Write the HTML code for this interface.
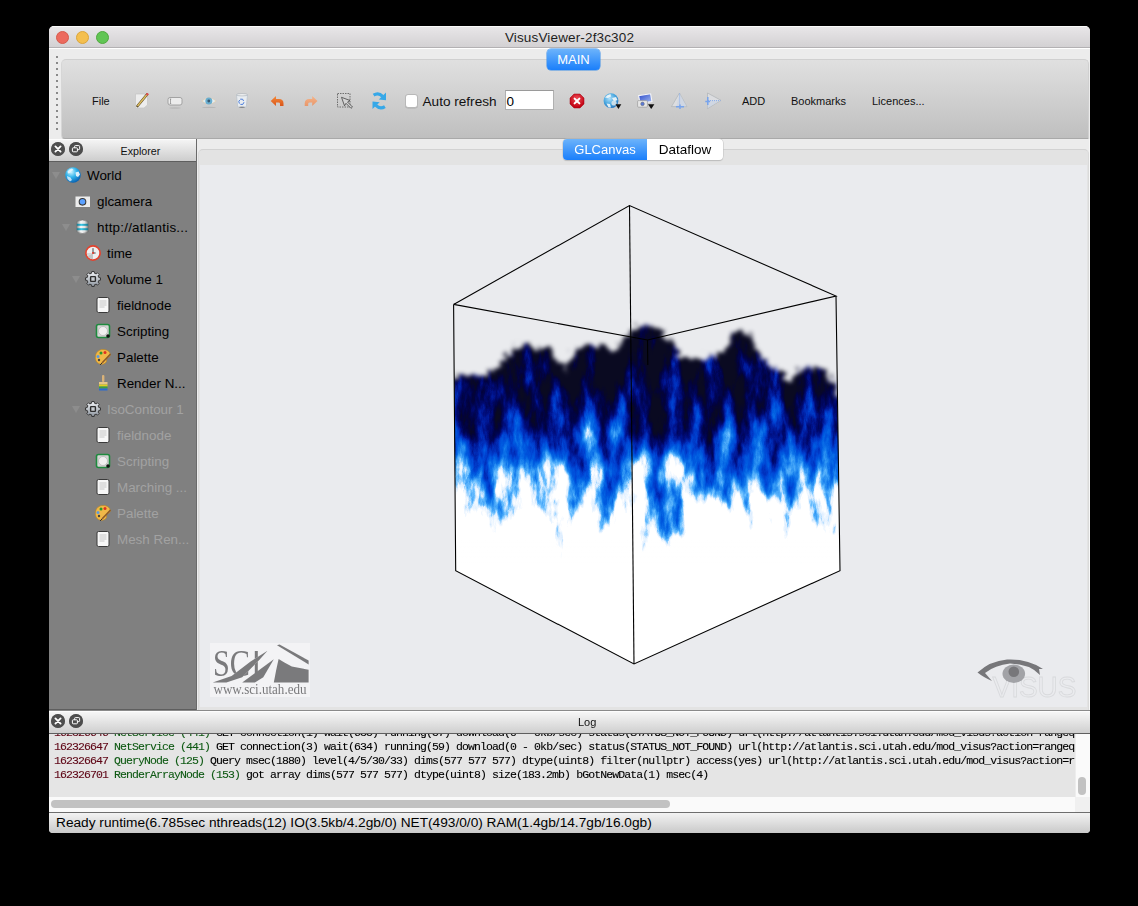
<!DOCTYPE html>
<html><head><meta charset="utf-8">
<style>
*{margin:0;padding:0;box-sizing:border-box}
html,body{width:1138px;height:906px;background:#000;overflow:hidden;font-family:"Liberation Sans",sans-serif}
.a{position:absolute}
#win{position:absolute;left:0;top:0;width:1138px;height:906px;clip-path:inset(26px 48px 73px 49px round 5px 5px 4px 4px);background:#ececec}
.tl{width:13px;height:13px;border-radius:50%;top:30.5px}
.grip{left:56px;width:2px;height:2px;background:#8a8a8a}
.tt{font-size:11px;color:#111;white-space:nowrap}
.ic{position:absolute}
.tree{font-size:13.4px;white-space:nowrap;color:#000}
.tree.g{color:#a2a2a2}
.tri{position:absolute;width:0;height:0;border-left:4.5px solid transparent;border-right:4.5px solid transparent;border-top:7px solid #8d8d8d}
.log{font-family:"Liberation Mono",monospace;font-size:11.5px;letter-spacing:-0.9px;white-space:pre;color:#000;position:absolute;-webkit-text-stroke:.1px currentColor}
.log .d{color:#5e0515}
.log .n{color:#0f5a14}
.dbtn{width:14px;height:14px;border-radius:50%;background:#505050}
</style></head><body>
<div id="win">
  <!-- title bar -->
  <div class="a" style="left:49px;top:26px;width:1041px;height:21px;background:linear-gradient(#e8e6e8,#d3d1d3);border-top:1px solid #fafafa"></div>
  <div class="a" style="left:49px;top:47px;width:1041px;height:1px;background:#b3b1b3"></div>
  <div class="a" style="left:49px;top:48px;width:1041px;height:1px;background:#ffffff"></div>
  <div class="a" style="left:49px;top:30px;width:1041px;text-align:center;font-size:13.5px;letter-spacing:.15px;color:#1e1e1e">VisusViewer-2f3c302</div>
  <div class="tl a" style="left:56px;background:#ec6a5e;border:1px solid #d55a4c"></div>
  <div class="tl a" style="left:76px;background:#f4bf4f;border:1px solid #dba53a"></div>
  <div class="tl a" style="left:96px;background:#61c554;border:1px solid #4fa83e"></div>

  <!-- toolbar -->
  <div class="a" style="left:61px;top:59px;width:1028px;height:80px;border-radius:5px 5px 0 4px;background:linear-gradient(#e0e0e0,#bfbfbf);border-top:1px solid #d0d0d0;border-left:1px solid #d6d6d6;border-right:1px solid #d0d0d0;border-bottom:1px solid #a9a9a9"></div>
  <div class="grip a" style="top:56px"></div><div class="grip a" style="top:62px"></div><div class="grip a" style="top:68px"></div><div class="grip a" style="top:74px"></div><div class="grip a" style="top:80px"></div><div class="grip a" style="top:86px"></div><div class="grip a" style="top:92px"></div><div class="grip a" style="top:98px"></div><div class="grip a" style="top:104px"></div><div class="grip a" style="top:110px"></div><div class="grip a" style="top:116px"></div><div class="grip a" style="top:122px"></div><div class="grip a" style="top:128px"></div>
  <div class="a" style="left:547px;top:49px;width:53px;height:21px;border-radius:4px;background:linear-gradient(#6cb3fb,#1a7ffb);box-shadow:0 0 0 0.5px #3b8de8;color:#fff;font-size:13px;text-align:center;line-height:21px">MAIN</div>

<svg class="a" style="left:0;top:0" width="1138" height="140" viewBox="0 0 1138 140">
<defs>
<linearGradient id="orng" x1="0" y1="0" x2="0" y2="1"><stop offset="0" stop-color="#f58a3a"/><stop offset="1" stop-color="#d9561a"/></linearGradient>
<linearGradient id="orng2" x1="0" y1="0" x2="0" y2="1"><stop offset="0" stop-color="#f6b488"/><stop offset="1" stop-color="#e8966a"/></linearGradient>
<radialGradient id="rstop" cx="50%" cy="35%" r="60%"><stop offset="0" stop-color="#f0505a"/><stop offset="1" stop-color="#c00010"/></radialGradient>
<radialGradient id="glb" cx="40%" cy="35%" r="65%"><stop offset="0" stop-color="#b0e0fa"/><stop offset=".6" stop-color="#4aa8e0"/><stop offset="1" stop-color="#2a7ac0"/></radialGradient>
</defs>
<!-- pencil/paper -->
<path d="M135.5 94 H144.5 L147.5 97 V105 L144 108 H135.5 Z" fill="#ededed" stroke="#c4c4c4" stroke-width=".7"/>
<path d="M137.5 106 L147 94.5" stroke="#5a4a2a" stroke-width="2.6" stroke-linecap="round"/>
<path d="M137.5 106 L147 94.5" stroke="#e0c060" stroke-width="1.4"/>
<circle cx="147.3" cy="94.2" r="1.2" fill="#e05050"/>
<!-- textbox -->
<rect x="168" y="97.5" width="14" height="7.5" rx="2" fill="#ececec" stroke="#9c9c9c" stroke-width=".9"/>
<path d="M170.5 99 V103.5 M169.8 99 H171.2 M169.8 103.5 H171.2" stroke="#777" stroke-width=".6"/>
<ellipse cx="175" cy="108" rx="6" ry=".8" fill="#b0b0b0" opacity=".7"/>
<!-- eye -->
<path d="M201.8 101 Q209 95 216.2 101 Q209 107 201.8 101Z" fill="#e2eef2" stroke="#e8c89a" stroke-width=".5"/>
<circle cx="208.8" cy="101" r="3.5" fill="#6aaed0"/>
<circle cx="208.8" cy="101" r="1.4" fill="#3a5a70"/>
<ellipse cx="209" cy="107.4" rx="7" ry=".7" fill="#a8a8a8" opacity=".6"/>
<!-- trash -->
<path d="M236.5 94.8 H247.5 L246.3 106.8 Q242 108.6 237.7 106.8 Z" fill="#e8ecf0" stroke="#b8c0c8" stroke-width=".7"/>
<ellipse cx="242" cy="94.8" rx="5.5" ry="1.1" fill="#f6f6f6" stroke="#a0a8b0" stroke-width=".6"/>
<ellipse cx="242" cy="107.2" rx="3" ry=".8" fill="#555" opacity=".6"/>
<path d="M240.2 99.2 L242.6 99.2 L243.6 101" stroke="#3a70d8" stroke-width=".9" fill="none"/>
<path d="M244 102.2 L242.8 104.4 L240.4 104.4" stroke="#3a70d8" stroke-width=".9" fill="none"/>
<path d="M239.4 103.6 L238.8 101.4 L239.8 100" stroke="#3a70d8" stroke-width=".9" fill="none"/>
<!-- undo -->
<path d="M270.7 101 L276 96 V99 H279 Q283.5 99 283.5 103.5 V106 H280 V103.8 Q280 102.5 278.5 102.5 H276 V106 Z" fill="url(#orng)"/>
<!-- redo -->
<path d="M317.5 101 L312.2 96 V99 H309.2 Q304.7 99 304.7 103.5 V106 H308.2 V103.8 Q308.2 102.5 309.7 102.5 H312.2 V106 Z" fill="url(#orng2)"/>
<!-- select -->
<rect x="337.5" y="93.5" width="12.5" height="13.5" fill="none" stroke="#555" stroke-width=".8" stroke-dasharray="1.5 1"/>
<path d="M341.5 97.3 L350 100.5 L347.5 102 L352.5 107 L351 108.3 L346 103.3 L344.5 105.8 Z" fill="#d4d4d4" stroke="#444" stroke-width=".8"/>
<!-- refresh -->
<path d="M373.6 95.2 Q378.5 92.2 382.6 96.4" stroke="#36a8e8" stroke-width="3.2" fill="none"/>
<path d="M386 92.6 L386 100.2 L378.8 99.4 Z" fill="#36a8e8"/>
<path d="M384.9 106.6 Q380 109.6 375.9 105.4" stroke="#36a8e8" stroke-width="3.2" fill="none"/>
<path d="M372.5 109 L372.5 101.4 L379.7 102.2 Z" fill="#36a8e8"/>
<!-- stop -->
<path d="M574 94 H580 L584 98 V104 L580 108 H574 L570 104 V98 Z" fill="url(#rstop)" stroke="#a00010" stroke-width=".5"/>
<path d="M574.6 98.6 L579.4 103.4 M579.4 98.6 L574.6 103.4" stroke="#fff" stroke-width="2" stroke-linecap="round"/>
<!-- globe -->
<circle cx="611" cy="100.7" r="7.4" fill="url(#glb)"/>
<path d="M605 97.5 Q607 94.5 610.5 94 L611 96.5 L608 98 Z M612 98 L616 97 L617.5 100 L614 101.5Z M606.5 103.5 L610 104 L611 107.5 L608.5 107.5Z" fill="#f4f8fa" opacity=".9"/>
<circle cx="614" cy="103" r="2.6" fill="#d8e4ea" opacity=".9"/>
<path d="M615.5 104.3 H621.3 L618.4 109 Z" fill="#111"/>
<!-- picture/camera -->
<defs><linearGradient id="phg" x1="0" y1="0" x2="1" y2="1"><stop offset="0" stop-color="#2a48c8"/><stop offset="1" stop-color="#a8c0f4"/></linearGradient></defs>
<path d="M638.6 95.6 L650.6 93.8 L652 101.6 L640 103.4 Z" fill="url(#phg)" stroke="#f4f4f8" stroke-width="1.1"/>
<rect x="637.6" y="100.6" width="9.8" height="6.6" rx="1" fill="#e6e6e6" stroke="#8e8e8e" stroke-width=".6"/>
<circle cx="642.5" cy="103.9" r="1.8" fill="#5a7ad8" stroke="#666" stroke-width=".5"/>
<path d="M648 104.3 H654.4 L651.2 109 Z" fill="#111"/>
<!-- pyramid 1 -->
<path d="M679.4 93.1 L671.5 106.6 H686.9 Z" fill="#dcdde0" stroke="#a8acb0" stroke-width=".6"/>
<path d="M679.4 93.1 L676.5 106.6 H686.9 Z" fill="#c8d4e4" opacity=".6"/>
<path d="M679.6 93.5 V106" stroke="#7ea8ea" stroke-width=".9" stroke-dasharray="1 1"/>
<path d="M676 106.7 H684 M680 104.5 L680 109" stroke="#78a4ec" stroke-width="1.5"/>
<!-- pyramid 2 -->
<path d="M707.5 93 L721 100.3 L707.5 108.6 Z" fill="#dcdde0" stroke="#a8acb0" stroke-width=".6"/>
<path d="M707.5 100.3 L721 100.3 L707.5 108.6 Z" fill="#c8d4e4" opacity=".6"/>
<path d="M708 100.6 H720.5" stroke="#7ea8ea" stroke-width=".9" stroke-dasharray="1 1"/>
<path d="M707.8 97 V105 M705.3 101.6 H710" stroke="#78a4ec" stroke-width="1.5"/>
</svg>
  <div class="tt a" style="left:92px;top:95px">File</div>
  <div class="a" style="left:404.5px;top:94px;width:13.5px;height:13.5px;background:#fff;border:1px solid #b8b8b8;border-radius:3px;box-shadow:0 0.5px 0.5px rgba(0,0,0,.15)"></div>
  <div class="a" style="left:422.5px;top:94px;font-size:13.6px;color:#111;white-space:nowrap">Auto refresh</div>
  <div class="a" style="left:505px;top:90px;width:49px;height:20px;background:#fff;border:1px solid #b0b0b0;border-top-color:#9a9a9a"></div>
  <div class="a" style="left:506.5px;top:94px;font-size:13.5px;color:#000">0</div>
  <div class="tt a" style="left:742px;top:95px">ADD</div>
  <div class="tt a" style="left:791px;top:95px">Bookmarks</div>
  <div class="tt a" style="left:872px;top:95px">Licences...</div>

  <!-- explorer dock -->
  <div class="a" style="left:49px;top:139px;width:148px;height:22px;background:linear-gradient(#f4f4f4,#cdcdcd);border-top:1px solid #fdfdfd"></div>
  <div class="a" style="left:49px;top:161px;width:148px;height:1px;background:#5e5e5e"></div>
  <div class="a" style="left:49px;top:162px;width:147px;height:547px;background:#808080"></div>
  <div class="a" style="left:49px;top:709px;width:148px;height:1px;background:#5e5e5e"></div>
  <div class="a" style="left:196px;top:139px;width:1px;height:571px;background:#6a6a6a"></div>
  <div class="dbtn a" style="left:51px;top:142px"><svg width="14" height="14" style="position:absolute;left:0;top:0"><circle cx="7" cy="7" r="6.8" fill="#4d4d4d"/><path d="M4.4 4.4 L9.6 9.6 M9.6 4.4 L4.4 9.6" stroke="#fff" stroke-width="1.8" stroke-linecap="round"/></svg></div>
  <div class="dbtn a" style="left:69px;top:142px"><svg width="14" height="14" style="position:absolute;left:0;top:0"><circle cx="7" cy="7" r="6.8" fill="#4d4d4d"/><rect x="5.6" y="3.6" width="5" height="4" rx=".8" fill="none" stroke="#fff" stroke-width="1"/><rect x="3.4" y="5.8" width="5" height="4" rx=".8" fill="#4d4d4d" stroke="#fff" stroke-width="1"/></svg></div>
  <div class="a" style="left:120.5px;top:144.5px;font-size:10.7px;color:#111;white-space:nowrap">Explorer</div>

  <div class="tri" style="left:52px;top:172px"></div><div class="a ico0" style="left:65px;top:167px;width:16px;height:16px"><svg width="18" height="18" viewBox="0 0 18 18" style="position:absolute;left:-1px;top:-1px"><defs><radialGradient id="gw" cx="38%" cy="30%" r="70%"><stop offset="0" stop-color="#d0f4ff"/><stop offset=".5" stop-color="#30b4ec"/><stop offset="1" stop-color="#0a64b4"/></radialGradient></defs><circle cx="9" cy="9" r="7.8" fill="url(#gw)"/><path d="M3.5 5.5 Q5 3 8 2.6 L9.5 4 L7 5.2 L6.2 7 L4 7.5Z" fill="#e8f6ff" opacity=".9"/><path d="M11.5 6.5 L14.5 5.5 L16 8.5 L14 11 L12 10 Z" fill="#f2faff" opacity=".9"/><path d="M3 10 L6.5 11.5 L8 14 L6 15.5 L3.5 13Z" fill="#d8efff" opacity=".85"/></svg></div><div class="tree a" style="left:87px;top:168px">World</div>
<div class="a ico1" style="left:75px;top:193px;width:16px;height:16px"><svg width="16" height="12" style="position:absolute;left:0;top:3px"><rect x=".5" y=".5" width="14.5" height="10.5" fill="#ececec"/><circle cx="7.5" cy="5.8" r="3.3" fill="#5aa0ff" stroke="#3a3a3a" stroke-width="1.1"/></svg></div><div class="tree a" style="left:97px;top:194px">glcamera</div>
<div class="tri" style="left:62px;top:224px"></div><div class="a ico2" style="left:75px;top:219px;width:16px;height:16px"><svg width="16" height="16" style="position:absolute;left:1px;top:0"><defs><linearGradient id="db" x1="0" x2="1"><stop offset="0" stop-color="#8a9090"/><stop offset=".35" stop-color="#f8f8f8"/><stop offset=".7" stop-color="#e0e0e0"/><stop offset="1" stop-color="#7a8080"/></linearGradient><linearGradient id="dbt" x1="0" x2="1"><stop offset="0" stop-color="#1a7a90"/><stop offset=".4" stop-color="#3ac8e8"/><stop offset="1" stop-color="#1a7a90"/></linearGradient></defs><path d="M0.8 2.5 Q6.5 -0.5 12.2 2.5 V13 Q6.5 16 0.8 13Z" fill="url(#db)" stroke="#6a6a6a" stroke-width=".5"/><rect x=".8" y="4.8" width="11.4" height="2" fill="url(#dbt)"/><rect x=".8" y="9.2" width="11.4" height="2" fill="url(#dbt)"/></svg></div><div class="tree a" style="letter-spacing:.23px;left:97px;top:220px">http://atlantis...</div>
<div class="a ico3" style="left:85px;top:245px;width:16px;height:16px"><svg width="18" height="18" style="position:absolute;left:-1px;top:-1px"><circle cx="9" cy="9" r="7.1" fill="#f0f0f0" stroke="#e4422e" stroke-width="1.7"/><path d="M9 9 L9 15.2 A6.2 6.2 0 0 1 3.6 12.1Z" fill="#c4c4c4"/><path d="M9 9 L3.6 12.1 A6.2 6.2 0 0 1 2.8 9Z" fill="#d6d6d6"/><path d="M9 4.2 V9 H11.6" stroke="#444" stroke-width="1" fill="none"/><circle cx="9" cy="9" r="1.1" fill="#e03a2a"/></svg></div><div class="tree a" style="left:107px;top:246px">time</div>
<div class="tri" style="left:72px;top:276px"></div><div class="a ico4" style="left:85px;top:271px;width:16px;height:16px"><svg width="18" height="18" viewBox="0 0 18 18" style="position:absolute;left:-1px;top:-1px"><defs><linearGradient id="gx0" x1="0" y1="0" x2="0" y2="1"><stop offset="0" stop-color="#f4f6f8"/><stop offset="1" stop-color="#8e96a0"/></linearGradient></defs><path d="M14.83 7.60 L16.51 7.81 L16.51 10.19 L14.83 10.40 L14.12 12.13 L15.15 13.47 L13.47 15.15 L12.13 14.12 L10.40 14.83 L10.19 16.51 L7.81 16.51 L7.60 14.83 L5.87 14.12 L4.53 15.15 L2.85 13.47 L3.88 12.13 L3.17 10.40 L1.49 10.19 L1.49 7.81 L3.17 7.60 L3.88 5.87 L2.85 4.53 L4.53 2.85 L5.87 3.88 L7.60 3.17 L7.81 1.49 L10.19 1.49 L10.40 3.17 L12.13 3.88 L13.47 2.85 L15.15 4.53 L14.12 5.87Z" fill="url(#gx0)" stroke="#2e2e2e" stroke-width=".9" stroke-linejoin="round"/><rect x="6.6" y="6.6" width="4.8" height="4.8" rx=".6" fill="#c8ccd0" stroke="#2e2e2e" stroke-width="1.4"/></svg></div><div class="tree a" style="left:107px;top:272px">Volume 1</div>
<div class="a ico5" style="left:95px;top:297px;width:16px;height:16px"><svg width="16" height="16" style="position:absolute;left:0;top:0"><rect x="2" y=".5" width="12" height="15" rx="1.5" fill="#f7f7f7" stroke="#3a3a3a" stroke-width="1"/><path d="M4.5 4h7M4.5 6h7M4.5 8h7M4.5 10h5" stroke="#bbb" stroke-width=".8"/></svg></div><div class="tree a" style="left:117px;top:298px">fieldnode</div>
<div class="a ico6" style="left:95px;top:323px;width:16px;height:16px"><svg width="16" height="16" style="position:absolute;left:0;top:0"><rect x="1.5" y="1.5" width="13" height="13" rx="2" fill="#d4d4d4" stroke="#1e8a3e" stroke-width="1.6"/><circle cx="8" cy="8" r="4.5" fill="#f0f0f0" stroke="#aaa" stroke-width=".6"/><circle cx="13" cy="13" r="1.8" fill="#111"/></svg></div><div class="tree a" style="left:117px;top:324px">Scripting</div>
<div class="a ico7" style="left:95px;top:349px;width:16px;height:16px"><svg width="18" height="18" style="position:absolute;left:-1px;top:-1px"><path d="M9 1.5 C14 1.5 17 4.5 16 8 C15 10 12 9 12.5 12 C13 15 9 17 6 16 C2 15 1 11 1.5 8 C2 4 5 1.5 9 1.5Z" fill="#f0b848" stroke="#c0841a" stroke-width=".6"/><circle cx="7" cy="5" r="1.5" fill="#2a9a2a"/><circle cx="11" cy="4.5" r="1.5" fill="#e03020"/><circle cx="4" cy="8.5" r="1.5" fill="#5a9ae0"/><circle cx="5" cy="12" r="1.2" fill="#444"/><path d="M16.5 6 L8 15" stroke="#8a5a2a" stroke-width="1.6"/><path d="M8 15 L6 17" stroke="#333" stroke-width="1"/></svg></div><div class="tree a" style="left:117px;top:350px">Palette</div>
<div class="a ico8" style="left:95px;top:375px;width:16px;height:16px"><svg width="16" height="16" style="position:absolute;left:0;top:0"><rect x="7" y="0" width="2.4" height="7" rx="1" fill="#d9b278"/><rect x="4" y="7" width="8.5" height="2.5" fill="#e6c58a"/><rect x="4" y="9.5" width="8.5" height="2" fill="#e0d020"/><rect x="4" y="11.5" width="8.5" height="2" fill="#3aa040"/><rect x="4" y="13.5" width="8.5" height="2" fill="#2a6ad0"/></svg></div><div class="tree a" style="left:117px;top:376px">Render N...</div>
<div class="tri" style="left:72px;top:406px"></div><div class="a ico9" style="left:85px;top:401px;width:16px;height:16px"><svg width="18" height="18" viewBox="0 0 18 18" style="position:absolute;left:-1px;top:-1px"><defs><linearGradient id="gx1" x1="0" y1="0" x2="0" y2="1"><stop offset="0" stop-color="#f4f6f8"/><stop offset="1" stop-color="#8e96a0"/></linearGradient></defs><path d="M14.83 7.60 L16.51 7.81 L16.51 10.19 L14.83 10.40 L14.12 12.13 L15.15 13.47 L13.47 15.15 L12.13 14.12 L10.40 14.83 L10.19 16.51 L7.81 16.51 L7.60 14.83 L5.87 14.12 L4.53 15.15 L2.85 13.47 L3.88 12.13 L3.17 10.40 L1.49 10.19 L1.49 7.81 L3.17 7.60 L3.88 5.87 L2.85 4.53 L4.53 2.85 L5.87 3.88 L7.60 3.17 L7.81 1.49 L10.19 1.49 L10.40 3.17 L12.13 3.88 L13.47 2.85 L15.15 4.53 L14.12 5.87Z" fill="url(#gx1)" stroke="#2e2e2e" stroke-width=".9" stroke-linejoin="round"/><rect x="6.6" y="6.6" width="4.8" height="4.8" rx=".6" fill="#c8ccd0" stroke="#2e2e2e" stroke-width="1.4"/></svg></div><div class="tree a g" style="left:107px;top:402px">IsoContour 1</div>
<div class="a ico10" style="left:95px;top:427px;width:16px;height:16px"><svg width="16" height="16" style="position:absolute;left:0;top:0"><rect x="2" y=".5" width="12" height="15" rx="1.5" fill="#f7f7f7" stroke="#3a3a3a" stroke-width="1"/><path d="M4.5 4h7M4.5 6h7M4.5 8h7M4.5 10h5" stroke="#bbb" stroke-width=".8"/></svg></div><div class="tree a g" style="left:117px;top:428px">fieldnode</div>
<div class="a ico11" style="left:95px;top:453px;width:16px;height:16px"><svg width="16" height="16" style="position:absolute;left:0;top:0"><rect x="1.5" y="1.5" width="13" height="13" rx="2" fill="#d4d4d4" stroke="#1e8a3e" stroke-width="1.6"/><circle cx="8" cy="8" r="4.5" fill="#f0f0f0" stroke="#aaa" stroke-width=".6"/><circle cx="13" cy="13" r="1.8" fill="#111"/></svg></div><div class="tree a g" style="left:117px;top:454px">Scripting</div>
<div class="a ico12" style="left:95px;top:479px;width:16px;height:16px"><svg width="16" height="16" style="position:absolute;left:0;top:0"><rect x="2" y=".5" width="12" height="15" rx="1.5" fill="#f7f7f7" stroke="#3a3a3a" stroke-width="1"/><path d="M4.5 4h7M4.5 6h7M4.5 8h7M4.5 10h5" stroke="#bbb" stroke-width=".8"/></svg></div><div class="tree a g" style="left:117px;top:480px">Marching ...</div>
<div class="a ico13" style="left:95px;top:505px;width:16px;height:16px"><svg width="18" height="18" style="position:absolute;left:-1px;top:-1px"><path d="M9 1.5 C14 1.5 17 4.5 16 8 C15 10 12 9 12.5 12 C13 15 9 17 6 16 C2 15 1 11 1.5 8 C2 4 5 1.5 9 1.5Z" fill="#f0b848" stroke="#c0841a" stroke-width=".6"/><circle cx="7" cy="5" r="1.5" fill="#2a9a2a"/><circle cx="11" cy="4.5" r="1.5" fill="#e03020"/><circle cx="4" cy="8.5" r="1.5" fill="#5a9ae0"/><circle cx="5" cy="12" r="1.2" fill="#444"/><path d="M16.5 6 L8 15" stroke="#8a5a2a" stroke-width="1.6"/><path d="M8 15 L6 17" stroke="#333" stroke-width="1"/></svg></div><div class="tree a g" style="left:117px;top:506px">Palette</div>
<div class="a ico14" style="left:95px;top:531px;width:16px;height:16px"><svg width="16" height="16" style="position:absolute;left:0;top:0"><rect x="2" y=".5" width="12" height="15" rx="1.5" fill="#f7f7f7" stroke="#3a3a3a" stroke-width="1"/><path d="M4.5 4h7M4.5 6h7M4.5 8h7M4.5 10h5" stroke="#bbb" stroke-width=".8"/></svg></div><div class="tree a g" style="left:117px;top:532px">Mesh Ren...</div>

  <!-- main tab area -->
  <div class="a" style="left:198px;top:149px;width:891px;height:561px;border-radius:5px 5px 0 0;background:#e3e3e3;border-top:1px solid #d2d2d2;border-left:1px solid #dadada;border-right:1px solid #dadada"></div>
  <div class="a" style="left:200px;top:165px;width:887px;height:542px;background:#eaebee"></div>
<svg class="a" width="1138" height="906" style="left:0;top:0">
<defs>
<clipPath id="cubeclip"><polygon points="453.6,304.4 629.5,205.5 836,296 840,570.7 634,664 455.7,570.7"/></clipPath>
<linearGradient id="dens" x1="0" y1="330" x2="0" y2="540" gradientUnits="userSpaceOnUse"><stop offset="0.000" stop-color="rgb(229,229,229)"/><stop offset="0.190" stop-color="rgb(204,204,204)"/><stop offset="0.371" stop-color="rgb(173,173,173)"/><stop offset="0.562" stop-color="rgb(132,132,132)"/><stop offset="0.762" stop-color="rgb(76,76,76)"/><stop offset="1.000" stop-color="rgb(0,0,0)"/></linearGradient>
<linearGradient id="wfade" x1="0" y1="540" x2="0" y2="566" gradientUnits="userSpaceOnUse"><stop offset="0" stop-color="#fff" stop-opacity="0"/><stop offset="1" stop-color="#fff" stop-opacity="1"/></linearGradient>
<filter id="bl8" x="400" y="300" width="500" height="400" filterUnits="userSpaceOnUse"><feGaussianBlur stdDeviation="8"/></filter>
<filter id="mblur" x="430" y="280" width="430" height="440" filterUnits="userSpaceOnUse"><feTurbulence type="fractalNoise" baseFrequency="0.13" numOctaves="3" seed="3" result="mn"/><feDisplacementMap in="SourceGraphic" in2="mn" scale="16" xChannelSelector="R" yChannelSelector="G" result="d"/><feGaussianBlur in="d" stdDeviation="2.2"/></filter>
<mask id="topmask" maskUnits="userSpaceOnUse" x="430" y="180" width="430" height="520"><path d="M450 380 C452.0 379.0 457.8 374.7 462 374 C466.2 373.3 470.3 376.3 475 376 C479.7 375.7 485.8 374.0 490 372 C494.2 370.0 497.2 367.0 500 364 C502.8 361.0 503.7 357.0 507 354 C510.3 351.0 515.3 347.2 520 346 C524.7 344.8 530.3 346.2 535 347 C539.7 347.8 544.2 348.8 548 351 C551.8 353.2 555.0 357.2 558 360 C561.0 362.8 563.7 368.7 566 368 C568.3 367.3 570.0 359.3 572 356 C574.0 352.7 574.7 349.8 578 348 C581.3 346.2 587.5 345.2 592 345 C596.5 344.8 601.0 346.2 605 347 C609.0 347.8 612.5 351.8 616 350 C619.5 348.2 622.7 339.8 626 336 C629.3 332.2 632.0 328.7 636 327 C640.0 325.3 645.7 325.5 650 326 C654.3 326.5 658.3 326.8 662 330 C665.7 333.2 668.7 340.7 672 345 C675.3 349.3 677.3 353.8 682 356 C686.7 358.2 694.7 358.2 700 358 C705.3 357.8 710.0 356.3 714 355 C718.0 353.7 721.0 353.5 724 350 C727.0 346.5 729.0 337.2 732 334 C735.0 330.8 738.7 330.3 742 331 C745.3 331.7 749.0 333.8 752 338 C755.0 342.2 756.2 350.8 760 356 C763.8 361.2 770.0 365.0 775 369 C780.0 373.0 786.3 379.5 790 380 C793.7 380.5 794.3 374.3 797 372 C799.7 369.7 802.5 366.7 806 366 C809.5 365.3 814.3 366.8 818 368 C821.7 369.2 825.0 369.0 828 373 C831.0 377.0 833.2 387.5 836 392 C838.8 396.5 843.5 398.7 845 400 L845 700 L440 700 Z" fill="#fff" filter="url(#mblur)"/></mask>
<filter id="flame" x="440" y="190" width="410" height="490" filterUnits="userSpaceOnUse" color-interpolation-filters="sRGB">
<feTurbulence type="fractalNoise" baseFrequency="0.06 0.02" numOctaves="5" seed="7" result="n"/>
<feColorMatrix in="n" type="matrix" values="1 0 0 0 0  1 0 0 0 0  1 0 0 0 0  0 0 0 0 1" result="ng"/>
<feComposite in="SourceGraphic" in2="ng" operator="arithmetic" k1="0" k2="1" k3="0.75" k4="-0.375" result="v"/>
<feComponentTransfer in="v">
<feFuncR type="table" tableValues="1 1 1 1 1 .88 .42 .2 .06 0 0 0 0 0 0 .01 .03 .04 .04 .04 .04"/>
<feFuncG type="table" tableValues="1 1 1 1 1 .94 .75 .6 .46 .36 .28 .19 .1 .04 .02 .01 .03 .04 .04 .04 .04"/>
<feFuncB type="table" tableValues="1 1 1 1 1 1 1 .96 .92 .88 .84 .74 .6 .45 .33 .24 .16 .13 .13 .13 .13"/>
</feComponentTransfer>
</filter>
</defs>
<g clip-path="url(#cubeclip)"><g mask="url(#topmask)">
<g filter="url(#flame)"><rect x="440" y="190" width="410" height="490" fill="url(#dens)"/>
<g filter="url(#bl8)">
<ellipse cx="662" cy="515" rx="16" ry="40" fill="#fff" opacity=".22"/>
<ellipse cx="600" cy="500" rx="14" ry="25" fill="#fff" opacity=".12"/>
<ellipse cx="490" cy="500" rx="12" ry="25" fill="#fff" opacity=".12"/>
<ellipse cx="458" cy="480" rx="12" ry="40" fill="#000" opacity=".35"/>
<ellipse cx="522" cy="485" rx="10" ry="20" fill="#000" opacity=".15"/>
<ellipse cx="642" cy="500" rx="7" ry="30" fill="#000" opacity=".2"/>
<ellipse cx="825" cy="490" rx="12" ry="25" fill="#000" opacity=".15"/>
</g></g>
</g>
<rect x="440" y="540" width="410" height="140" fill="url(#wfade)"/>
</g>
<g stroke="#000" stroke-width="1.1" fill="none">
<path d="M453.6 304.4 L629.5 205.5 L836 296 L647.5 340 L453.6 304.4"/>
<path d="M629.5 205.5 L634 664"/>
<path d="M647.5 340 L647.8 365"/>
<path d="M453.6 304.4 L455.7 570.7 L634 664 L840 570.7 L836 296"/>
</g>
</svg>
<svg class="a" width="1138" height="906" style="left:0;top:0">
<rect x="210" y="643" width="100" height="54" fill="#f3f3f5"/>
<g fill="#7a7a7c">
<text x="213" y="676" font-family="Liberation Serif" font-size="37" textLength="37" lengthAdjust="spacingAndGlyphs">SC</text>
<rect x="254.8" y="651" width="3" height="25"/>
<path d="M212.7 682.5 L231.6 676.1 L250.6 661.4 L267.5 650.8 L259 660.3 L242.2 677.2 L226.4 682.5Z" fill="#f3f3f5"/>
<path d="M212.7 682.5 L231.6 676.1 L250.6 661.4 L267.5 650.8 L259 660.3 L242.2 677.2 L226.4 682.5Z"/>
<path d="M242.2 682.5 L273.8 659.3 L263.3 677.2 L254.9 682.5Z"/>
<path d="M276 671 L278.6 659 L284.4 662.4 L291.8 666.6 L308.6 669.8 L308.6 682.5 L273.8 682.5Z"/>
<path d="M277 645.3 L279.5 644.5 L308.6 660.5 L308.6 664.5Z"/>
<text x="213.5" y="693.5" font-family="Liberation Serif" font-size="15" textLength="93" lengthAdjust="spacingAndGlyphs">www.sci.utah.edu</text>
</g>
<text x="992.5" y="696.5" font-family="Liberation Sans" font-size="30" fill="none" stroke="#d9dadd" stroke-width=".9" textLength="84" lengthAdjust="spacingAndGlyphs">VISUS</text>
<ellipse cx="1013.8" cy="673.7" rx="11.3" ry="9.2" fill="#a2a3a7"/>
<circle cx="1013.8" cy="671.8" r="5.3" fill="#77777a"/>
<path d="M977.5 672.5 Q990 661 1007 659.5 Q1028 658.5 1043 669 L1039 669 L1040 675 Q1030 664 1010 663.5 Q995 665 985 673 L992 681 Q983 677 977.5 672.5Z" fill="#77777a"/>
</svg>
  <div class="a" style="left:563px;top:139px;width:160px;height:21px;border-radius:4px;background:#fff;box-shadow:0 0 0 0.5px #c4c4c4, 0 0.5px 1px rgba(0,0,0,.2)"></div>
  <div class="a" style="left:563px;top:139px;width:84px;height:21px;border-radius:4px 0 0 4px;background:linear-gradient(#6cb3fb,#1a7ffb)"></div>
  <div class="a" style="left:563px;top:142px;width:84px;text-align:center;font-size:13px;color:#fff">GLCanvas</div>
  <div class="a" style="left:647px;top:142px;width:76px;text-align:center;font-size:13.5px;color:#000">Dataflow</div>

  <div class="a" style="left:1089px;top:139px;width:1px;height:571px;background:#f7f7f7"></div>
  <!-- log dock -->
  <div class="a" style="left:49px;top:710px;width:1041px;height:1px;background:#8a8a8a"></div>
  <div class="a" style="left:49px;top:711px;width:1041px;height:22px;background:linear-gradient(#f6f6f6,#cfcfcf);border-top:1px solid #fdfdfd"></div>
  <div class="a" style="left:49px;top:733px;width:1041px;height:1px;background:#5e5e5e"></div>
  <div class="dbtn a" style="left:51px;top:714px"><svg width="14" height="14" style="position:absolute;left:0;top:0"><circle cx="7" cy="7" r="6.8" fill="#4d4d4d"/><path d="M4.4 4.4 L9.6 9.6 M9.6 4.4 L4.4 9.6" stroke="#fff" stroke-width="1.8" stroke-linecap="round"/></svg></div>
  <div class="dbtn a" style="left:69px;top:714px"><svg width="14" height="14" style="position:absolute;left:0;top:0"><circle cx="7" cy="7" r="6.8" fill="#4d4d4d"/><rect x="5.6" y="3.6" width="5" height="4" rx=".8" fill="none" stroke="#fff" stroke-width="1"/><rect x="3.4" y="5.8" width="5" height="4" rx=".8" fill="#4d4d4d" stroke="#fff" stroke-width="1"/></svg></div>
  <div class="tt a" style="left:578px;top:716px">Log</div>
  <div class="a" style="left:49px;top:734px;width:1026px;height:63px;background:#e5e5e5;overflow:hidden">
<div class="log" style="top:-8.0px;left:5px"><span class="d">162326646</span> <span class="n">NetService (441)</span> GET connection(1) wait(635) running(57) download(0 - 0kb/sec) status(STATUS_NOT_FOUND) url(http://atlantis.sci.utah.edu/mod_visus?action=rangeq</div>
<div class="log" style="top:6.0px;left:5px"><span class="d">162326647</span> <span class="n">NetService (441)</span> GET connection(3) wait(634) running(59) download(0 - 0kb/sec) status(STATUS_NOT_FOUND) url(http://atlantis.sci.utah.edu/mod_visus?action=rangeq</div>
<div class="log" style="top:20.0px;left:5px"><span class="d">162326647</span> <span class="n">QueryNode (125)</span> Query msec(1880) level(4/5/30/33) dims(577 577 577) dtype(uint8) filter(nullptr) access(yes) url(http://atlantis.sci.utah.edu/mod_visus?action=r</div>
<div class="log" style="top:34.0px;left:5px"><span class="d">162326701</span> <span class="n">RenderArrayNode (153)</span> got array dims(577 577 577) dtype(uint8) size(183.2mb) bGotNewData(1) msec(4)</div>
  </div>
  <div class="a" style="left:1075px;top:734px;width:15px;height:63px;background:#fafafa;border-left:1px solid #ededed"></div>
  <div class="a" style="left:1078px;top:777px;width:8px;height:18px;border-radius:4px;background:#c2c2c2"></div>
  <div class="a" style="left:49px;top:797px;width:1026px;height:15px;background:#fafafa"></div>
  <div class="a" style="left:51px;top:800px;width:619px;height:8px;border-radius:4px;background:#c2c2c2"></div>
  <div class="a" style="left:1075px;top:797px;width:15px;height:15px;background:#f0f0f0"></div>
  <div class="a" style="left:49px;top:812px;width:1041px;height:1px;background:#6e6e6e"></div>
  <div class="a" style="left:49px;top:813px;width:1041px;height:20px;background:linear-gradient(#f3f3f3,#c9c9c9)"></div>
  <div class="a" style="left:56px;top:815px;font-size:13.7px;color:#000;white-space:nowrap">Ready runtime(6.785sec nthreads(12) IO(3.5kb/4.2gb/0) NET(493/0/0) RAM(1.4gb/14.7gb/16.0gb)</div>
</div>
</body></html>
